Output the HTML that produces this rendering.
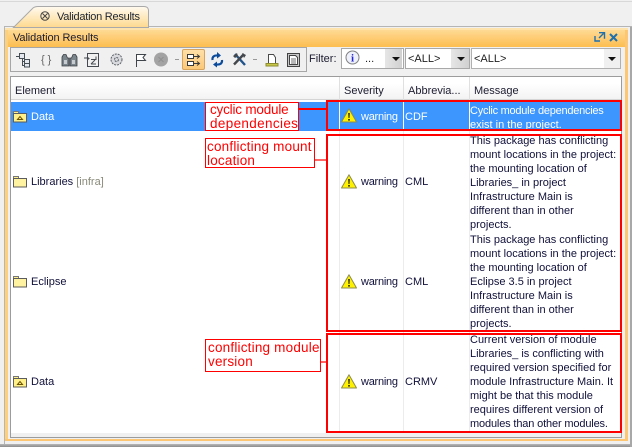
<!DOCTYPE html>
<html><head><meta charset="utf-8"><style>
html,body{margin:0;padding:0}
body{width:632px;height:447px;position:relative;overflow:hidden;background:#f0f0f0;font-family:"Liberation Sans",sans-serif;font-size:11px;color:#10103a}
.a{position:absolute}
.t{position:absolute;white-space:nowrap;line-height:14px}
.w{letter-spacing:-.25px}
.m{position:absolute;left:470px;width:160px;line-height:14px;white-space:nowrap}
.r{position:absolute;border:2px solid #f00;box-sizing:border-box}
.n{position:absolute;border:1px solid #f00;background:#fff;box-sizing:border-box;color:#f00;font-size:13.5px;line-height:14px;white-space:nowrap;letter-spacing:.2px}
.l{position:absolute;background:#f00;height:1px}
.v{position:absolute;width:1px;background:#ececec;top:100px;height:337px}
svg{position:absolute;overflow:visible}
</style></head><body>
<div class="a" style="left:0;top:1px;width:632px;height:1px;background:#d8d8d8"></div>

<div class="a" style="left:4px;top:26px;width:628px;height:421px;background:#f0f0f0;border-top:1px solid #b5b5b5;border-left:1px solid #b5b5b5;box-sizing:border-box"></div>
<svg style="left:0;top:0" width="632" height="447"><defs><linearGradient id="g" x1="0" y1="0" x2="0" y2="1"><stop offset="0" stop-color="#fffaf0"/><stop offset="1" stop-color="#fed98e"/></linearGradient></defs><path d="M13.5 27.500 L33 8 Q35 6.500 38 6.500 L144 6.500 Q148 6.500 148.500 10 L148.500 27.500 Z" fill="url(#g)" stroke="#a9a9a9"/></svg>
<svg style="left:40px;top:11px" width="11" height="11" fill="none" stroke="#444"><circle cx="5" cy="5" r="4.200"/><path d="M2.500 2.500l5 5M7.500 2.500l-5 5"/></svg>
<div class="t" style="left:57px;top:10px;color:#1c2433;letter-spacing:-.25px">Validation Results</div>

<!-- orange frame -->
<div class="a" style="left:5px;top:28px;width:3px;height:413px;background:#fed07c"></div>
<div class="a" style="left:625px;top:28px;width:3px;height:413px;background:#fcc673"></div>
<div class="a" style="left:5px;top:439px;width:623px;height:2px;background:#fcc673"></div>
<div class="a" style="left:5px;top:28px;width:623px;height:2px;background:#fee3ac"></div>
<div class="a" style="left:8px;top:30px;width:617px;height:17px;background:linear-gradient(#feda94,#fdbd50)"></div>
<div class="a" style="left:0;top:444px;width:632px;height:3px;background:linear-gradient(#b8b8b8,#8c8c8c)"></div>
<div class="a" style="left:630px;top:27px;width:2px;height:420px;background:#a8a8a8"></div>
<div class="t" style="left:13px;top:31px;color:#1c1c30;letter-spacing:-.1px">Validation Results</div>
<svg style="left:594px;top:32px" width="12" height="10" fill="none" stroke="#1d6fae" stroke-width="1.400"><path d="M1 4v5h5M5 0.700h5.500v6M9.500 1.500L5 6"/></svg>
<svg style="left:609px;top:33px" width="10" height="9" fill="none" stroke="#1d6fae" stroke-width="2"><path d="M1 1l7 7M8 1l-7 7"/></svg>

<!-- toolbar -->
<div class="a" style="left:10px;top:47px;width:297px;height:25px;border:1px solid #a6a6a6;box-sizing:border-box;background:#f0f0f0"></div>
<svg style="left:14px;top:52px" width="18" height="16" fill="#e4e8ee" stroke="#454d55"><path d="M2 4.500h3M5.500 1.500h5v5h-5zM8.500 6.500v7.500M8.500 9.500h2M8.500 13.500h2M10.500 7.500h5v4h-5zM10.500 11.500h5v3.500h-5z"/></svg>
<div class="t" style="left:41px;top:53px;color:#666;font-size:11px;letter-spacing:3px">{}</div>
<svg style="left:61px;top:53px" width="17" height="14" fill="#7b858c" stroke="#3a3f44" stroke-width=".8"><path d="M1 4l1.500-2.500H5L6.500 5H8v8H1z"/><path d="M9 5h1.500L12 1.500h2.500L16 4v9H9z"/><path d="M3 7h3v4H3zM11 7h3v4h-3z" fill="#c6ccd0" stroke="none"/></svg>
<svg style="left:84px;top:52px" width="16" height="16" fill="none" stroke="#444a50"><path d="M3.500 1.500h11v13h-11zM0 6h4M3 5l2 1.500L3 8"/><path d="M7 7.500h5v-3M7 12h5M7 12l4-4"/></svg>
<svg style="left:109px;top:52px" width="15" height="15" fill="#d8dade" stroke="#5b6066" stroke-dasharray="2 1"><circle cx="7.500" cy="7.500" r="5.500"/><circle cx="7.500" cy="7.500" r="2" fill="none"/></svg>
<svg style="left:135px;top:53px" width="12" height="14" fill="#fff" stroke="#3f444a"><path d="M1.500 14V1.500h9L8 4.500l2.500 3h-9"/></svg>
<svg style="left:154px;top:52px" width="15" height="15"><circle cx="7" cy="7.500" r="7" fill="#a3a3a3"/><path d="M4.500 5l5 5M9.500 5l-5 5" stroke="#8f8f8f"/></svg>
<div class="a" style="left:175px;top:59px;width:4px;height:1px;background:#999"></div>
<div class="a" style="left:182px;top:49px;width:23px;height:21px;box-sizing:border-box;border:1px solid #d9a55c;border-radius:2px;background:linear-gradient(#ffe0a8,#fcc878)"></div>
<svg style="left:187px;top:53px" width="14" height="14" fill="#fff" stroke="#3a3a3a"><path d="M.5 1.500h6v4h-6zM.5 8.500h6v4h-6z"/><path d="M7 3.500h5M10 1.500l2.500 2-2.500 2M7 10.500h5M10 8.500l2.500 2-2.500 2" fill="none"/></svg>
<svg style="left:211px;top:52px" width="12" height="16" fill="none" stroke="#0c4c9c" stroke-width="2.200"><path d="M1.500 8Q1 3 7 3.500M11 8q.5 5-5.500 4.500"/><path d="M6 0l4 3.500L6 6.500z M6 9.500L2 12.500l4 3z" fill="#0c4c9c" stroke="none"/></svg>
<svg style="left:232px;top:52px" width="15" height="15" fill="none" stroke-width="2.400"><path d="M3 2l10 11" stroke="#20548c"/><path d="M12 2L2 12.500" stroke="#44484c"/><path d="M1 4l4-3 1 3-3 2z M10 1l4 2-2 3z" fill="#44484c" stroke="none"/></svg>
<div class="a" style="left:253px;top:59px;width:4px;height:1px;background:#999"></div>
<svg style="left:265px;top:52px" width="14" height="16" fill="#fff" stroke="#4a4a4a"><path d="M3.500 11.500V2.500h5l2 3v6z"/><path d="M1 11.500h12v2.500H1z" fill="#c6c64a" stroke="#8d8d30"/></svg>
<svg style="left:287px;top:53px" width="13" height="14" fill="#fff" stroke="#444"><path d="M.5.500h12v13H.5z" fill="#c8c8c8"/><path d="M2.500 2.500h6l2 2v7h-8z"/><path d="M4 6h5M4 8h5M4 10h5" stroke-width=".8"/></svg>
<div class="t" style="left:309px;top:52px;color:#1c1c30">Filter:</div>

<!-- filters -->
<div class="a" style="left:341px;top:48px;width:63px;height:21px;background:#fff;border:1px solid #a8a8a8;box-sizing:border-box"></div>
<div class="a" style="left:385px;top:49px;width:17px;height:19px;background:linear-gradient(90deg,#e6e6e6,#d0d0d0)"></div>
<svg style="left:345px;top:50px" width="16" height="16"><circle cx="7.500" cy="7.500" r="6.500" fill="#eef0fa" stroke="#808080"/><text x="7.500" y="11.500" text-anchor="middle" font-family="Liberation Serif" font-weight="bold" font-size="11" fill="#2222d8">i</text></svg>
<div class="t" style="left:365px;top:52px;color:#222">...</div>
<div class="a" style="left:392px;top:57px;border:4px solid transparent;border-top:4px solid #111;border-bottom:0;width:0;height:0"></div>
<div class="a" style="left:405px;top:48px;width:65px;height:21px;background:#fff;border:1px solid #a8a8a8;box-sizing:border-box"></div>
<div class="a" style="left:451px;top:49px;width:18px;height:19px;background:linear-gradient(90deg,#e6e6e6,#d0d0d0)"></div>
<div class="t" style="left:408px;top:52px;color:#222">&lt;ALL&gt;</div>
<div class="a" style="left:457px;top:57px;border:4px solid transparent;border-top:4px solid #111;border-bottom:0;width:0;height:0"></div>
<div class="a" style="left:471px;top:48px;width:150px;height:21px;background:#fff;border:1px solid #b0b0b0;box-sizing:border-box"></div>
<div class="t" style="left:474px;top:52px;color:#222">&lt;ALL&gt;</div>
<div class="a" style="left:604px;top:49px;width:16px;height:19px;background:#f0f0f0"></div>
<div class="a" style="left:608px;top:57px;border:4px solid transparent;border-top:4px solid #111;border-bottom:0;width:0;height:0"></div>

<!-- table -->
<div class="a" style="left:10px;top:76px;width:612px;height:362px;background:#fff;border:1px solid #9c9c9c;box-sizing:border-box"></div>
<div class="a" style="left:11px;top:77px;width:610px;height:23px;background:linear-gradient(#fff 0,#fff 30%,#f3f3f3 100%);border-bottom:1px solid #d5d5d5;box-sizing:border-box"></div>
<div class="a" style="left:339px;top:77px;width:1px;height:23px;background:#e0e0e0"></div>
<div class="a" style="left:403px;top:77px;width:1px;height:23px;background:#e0e0e0"></div>
<div class="a" style="left:469px;top:77px;width:1px;height:23px;background:#e0e0e0"></div>
<div class="t" style="left:15px;top:84px;color:#1c1c30">Element</div>
<div class="t" style="left:344px;top:84px;color:#1c1c30">Severity</div>
<div class="t" style="left:408px;top:84px;color:#1c1c30">Abbrevia...</div>
<div class="t" style="left:474px;top:84px;color:#1c1c30">Message</div>
<div class="a" style="left:11px;top:433px;width:610px;height:4px;background:#f0f0f0"></div>

<div class="v" style="left:339px;height:333px"></div>
<div class="v" style="left:403px;height:333px"></div>
<div class="v" style="left:469px;height:333px"></div>

<!-- selected row -->
<div class="a" style="left:11px;top:102px;width:610px;height:29px;background:#3d96fd"></div>
<div class="a" style="left:339px;top:102px;width:1px;height:29px;background:#fff"></div>
<div class="a" style="left:403px;top:102px;width:1px;height:29px;background:#fff"></div>
<div class="a" style="left:469px;top:102px;width:1px;height:29px;background:#fff"></div>

<!-- folders -->
<svg style="left:13px;top:111px" width="14" height="12"><path d="M.5 2.500V.5h5v2" fill="#fff08a" stroke="#777"/><path d="M.5 2.500h13v8.500H.5z" fill="#fff08a" stroke="#5c5c5c"/><path d="M4.500 8.500l2.500-3 2.500 3z" fill="none" stroke="#6b5200"/></svg>
<div class="t" style="left:31px;top:109px;color:#fff;margin-top:1px">Data</div>
<svg style="left:13px;top:176px" width="14" height="12"><path d="M.5 2.500V.5h5v2" fill="#fff08a" stroke="#777"/><path d="M.5 2.500h13v8.500H.5z" fill="#fff2a0" stroke="#5c5c5c"/></svg>
<div class="t" style="left:31px;top:175px;color:#10103a">Libraries <span style="color:#8a8a7a">[infra]</span></div>
<svg style="left:13px;top:276px" width="14" height="12"><path d="M.5 2.500V.5h5v2" fill="#fff08a" stroke="#777"/><path d="M.5 2.500h13v8.500H.5z" fill="#fff2a0" stroke="#5c5c5c"/></svg>
<div class="t" style="left:31px;top:275px;color:#10103a">Eclipse</div>
<svg style="left:13px;top:376px" width="14" height="12"><path d="M.5 2.500V.5h5v2" fill="#fff08a" stroke="#777"/><path d="M.5 2.500h13v8.500H.5z" fill="#fff08a" stroke="#5c5c5c"/><path d="M4.500 8.500l2.500-3 2.500 3z" fill="none" stroke="#6b5200"/></svg>
<div class="t" style="left:31px;top:375px;color:#10103a">Data</div>

<!-- warnings -->
<svg style="left:341px;top:108px" width="16" height="15"><path d="M8 .8L15.500 14H.5z" fill="#fff200" stroke="#8c8c50" stroke-linejoin="round"/><path d="M7.200 5h1.600l-.3 5h-1zM7.200 11h1.600v1.600H7.200z" fill="#222"/></svg>
<div class="t w" style="left:361px;top:110px;color:#fff">warning</div>
<div class="t" style="left:405px;top:110px;color:#fff">CDF</div>
<svg style="left:341px;top:174px" width="16" height="15"><path d="M8 .8L15.500 14H.5z" fill="#fff200" stroke="#8c8c50" stroke-linejoin="round"/><path d="M7.200 5h1.600l-.3 5h-1zM7.200 11h1.600v1.600H7.200z" fill="#222"/></svg>
<div class="t w" style="left:361px;top:175px">warning</div>
<div class="t" style="left:405px;top:175px">CML</div>
<svg style="left:341px;top:274px" width="16" height="15"><path d="M8 .8L15.500 14H.5z" fill="#fff200" stroke="#8c8c50" stroke-linejoin="round"/><path d="M7.200 5h1.600l-.3 5h-1zM7.200 11h1.600v1.600H7.200z" fill="#222"/></svg>
<div class="t w" style="left:361px;top:275px">warning</div>
<div class="t" style="left:405px;top:275px">CML</div>
<svg style="left:341px;top:374px" width="16" height="15"><path d="M8 .8L15.500 14H.5z" fill="#fff200" stroke="#8c8c50" stroke-linejoin="round"/><path d="M7.200 5h1.600l-.3 5h-1zM7.200 11h1.600v1.600H7.200z" fill="#222"/></svg>
<div class="t w" style="left:361px;top:375px">warning</div>
<div class="t" style="left:405px;top:375px">CRMV</div>

<!-- messages -->
<div class="m" style="top:104px;color:#fff"><span style="letter-spacing:-.25px">Cyclic module dependencies</span><br>exist in the project.</div>
<div class="m" style="top:134px">This package has conflicting<br>mount locations in the project:<br>the mounting location of<br>Libraries_ in project<br>Infrastructure Main is<br>different than in other<br>projects.</div>
<div class="m" style="top:233px">This package has conflicting<br>mount locations in the project:<br>the mounting location of<br>Eclipse 3.5 in project<br>Infrastructure Main is<br>different than in other<br>projects.</div>
<div class="m" style="top:333px">Current version of module<br>Libraries_ is conflicting with<br>required version specified for<br>module Infrastructure Main. It<br>might be that this module<br>requires different version of<br><span style="letter-spacing:-.15px">modules than other modules.</span></div>

<!-- annotations -->
<div class="r" style="left:326px;top:100px;width:296px;height:31px"></div>
<div class="r" style="left:326px;top:134px;width:296px;height:198px"></div>
<div class="r" style="left:326px;top:333px;width:296px;height:100px"></div>
<div class="l" style="left:299px;top:108px;width:27px;height:2px"></div>
<div class="l" style="left:315px;top:159px;width:11px;height:2px;background:#f66"></div>
<div class="l" style="left:320px;top:361px;width:6px;height:2px;background:#f66"></div>
<div class="n" style="left:205px;top:102px;width:94px;height:29px;padding:0 0 0 4px"><span style="letter-spacing:-.2px">cyclic module</span><br><span style="letter-spacing:.35px">dependencies</span></div>
<div class="n" style="left:205px;top:138px;width:110px;height:30px;padding:1px 0 0 1px">conflicting mount<br>location</div>
<div class="n" style="left:205px;top:339px;width:116px;height:33px;padding:1px 0 0 2px">conflicting module<br>version</div>
</body></html>
